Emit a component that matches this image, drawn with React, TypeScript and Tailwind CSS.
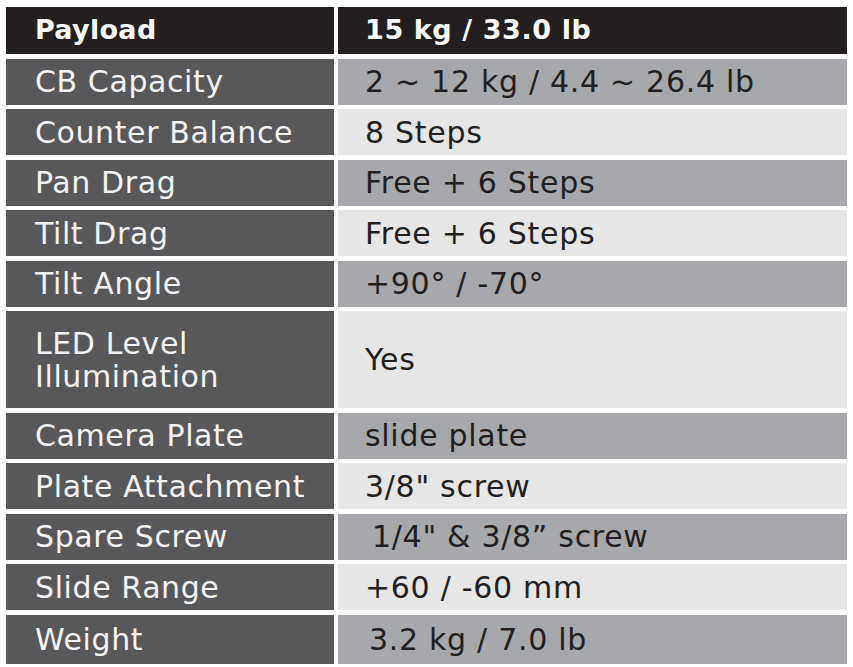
const specs: { label: React.ReactNode; value: string; tall?: boolean; pad?: string }[] = [
  { label: "CB Capacity", value: "2 ~ 12 kg / 4.4 ~ 26.4 lb" },
  { label: "Counter Balance", value: "8 Steps" },
  { label: "Pan Drag", value: "Free + 6 Steps" },
  { label: "Tilt Drag", value: "Free + 6 Steps" },
  { label: "Tilt Angle", value: "+90° / -70°" },
  {
    label: (
      <>
        LED Level
        <br />
        Illumination
      </>
    ),
    value: "Yes",
    tall: true,
  },
  { label: "Camera Plate", value: "slide plate" },
  { label: "Plate Attachment", value: '3/8" screw' },
  { label: "Spare Screw", value: "1/4\" & 3/8\u201d screw", pad: "pl-[34px]" },
  { label: "Slide Range", value: "+60 / -60 mm" },
  { label: "Weight", value: "3.2 kg / 7.0 lb", pad: "pl-[31px]" },
];

const App = () => {
  return (
    <div
      className="w-[853px] h-[667px] bg-white pt-[7px] pl-[6px] overflow-hidden"
      style={{ fontFamily: '"DejaVu Sans", Verdana, sans-serif' }}
    >
      <div className="grid grid-cols-[328px_509px] gap-x-[4px]">
        {/* header */}
        <div className="h-[47px] bg-[#231f20] text-white font-bold text-[27px] tracking-[0.3px] flex items-center pl-[29px]">
          Payload
        </div>
        <div className="h-[47px] bg-[#231f20] text-white font-bold text-[27px] tracking-[0.6px] flex items-center pl-[27px]">
          15 kg / 33.0 lb
        </div>

        {specs.map((s, i) => {
          const h = s.tall ? "h-[97px]" : i === specs.length - 1 ? "h-[49px]" : "h-[46px]";
          return (
            <div key={i} className="contents">
              <div
                className={`${h} ${s.tall ? "leading-[33px]" : ""} mt-[4.5px] bg-[#58585a] text-[#f4f4f4] text-[30px] tracking-[0.6px] flex items-center pl-[29px]`}
              >
                <span>{s.label}</span>
              </div>
              <div
                className={`${h} mt-[4.5px] ${i % 2 === 0 ? "bg-[#a7a8ab]" : "bg-[#e6e6e7]"} text-[#231f20] text-[30px] tracking-[0.7px] flex items-center ${s.pad ?? "pl-[27px]"}`}
              >
                {s.value}
              </div>
            </div>
          );
        })}
      </div>
    </div>
  );
};

export default App;
